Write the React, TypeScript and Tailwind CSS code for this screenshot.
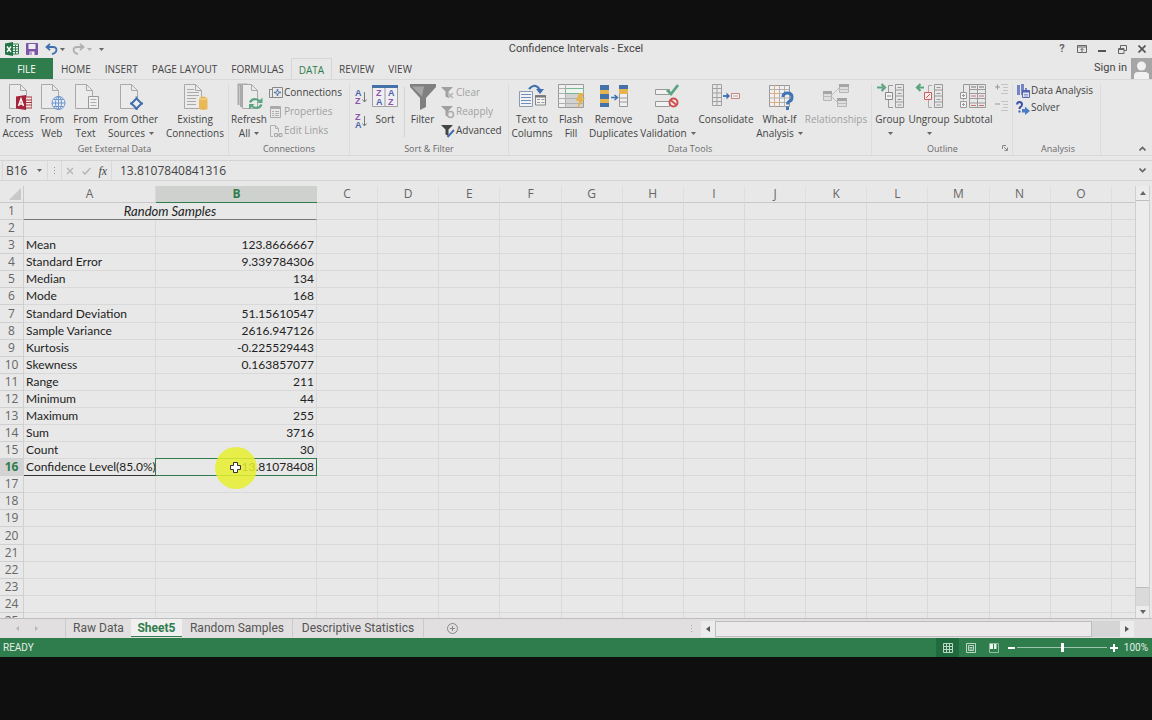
import type { ReactNode } from "react";
import { clsx } from "clsx";

const stats: [string, string][] = [
  ["Mean", "123.8666667"],
  ["Standard Error", "9.339784306"],
  ["Median", "134"],
  ["Mode", "168"],
  ["Standard Deviation", "51.15610547"],
  ["Sample Variance", "2616.947126"],
  ["Kurtosis", "-0.225529443"],
  ["Skewness", "0.163857077"],
  ["Range", "211"],
  ["Minimum", "44"],
  ["Maximum", "255"],
  ["Sum", "3716"],
  ["Count", "30"],
  ["Confidence Level(85.0%)", "13.81078408"],
];

const wideColumns = "CDEFGHIJKLMNO".split("");
const rowNumbers = Array.from({ length: 25 }, (_, i) => i + 1);

function Caret({ className = "" }: { className?: string }) {
  return (
    <svg viewBox="0 0 5 3" className={clsx("inline-block w-[5px] h-[3px] fill-[#666]", className)}>
      <path d="M0 0h5L2.5 3z" />
    </svg>
  );
}

function Icon({ children }: { children: ReactNode }) {
  return (
    <svg viewBox="0 0 28 28" className="w-7 h-7 shrink-0" fill="none">
      {children}
    </svg>
  );
}

function SmallIcon({ children }: { children: ReactNode }) {
  return (
    <svg viewBox="0 0 14 14" className="w-3.5 h-3.5 shrink-0" fill="none">
      {children}
    </svg>
  );
}

/* blank sheet with a folded corner, shared by the data source icons */
function Page() {
  return (
    <>
      <path d="M3.5 1.5h11l6 6v18h-17z" fill="#ebebeb" stroke="#a9a9a9" />
      <path d="M14.5 1.5v6h6" stroke="#a9a9a9" />
    </>
  );
}

type BigButtonProps = {
  icon: ReactNode;
  lines: string[];
  className: string;
  caret?: boolean;
  disabled?: boolean;
};

function BigButton({ icon, lines, className, caret, disabled }: BigButtonProps) {
  return (
    <button
      type="button"
      disabled={disabled}
      className={clsx(
        "flex flex-col items-center shrink-0 whitespace-nowrap leading-[14px]",
        disabled ? "text-[#a0a0a0]" : "text-[#444]",
        className
      )}
    >
      {icon}
      <span className="mt-px">{lines[0]}</span>
      <span className="flex items-center gap-1 h-3.5">
        {lines[1]}
        {caret && <Caret />}
      </span>
    </button>
  );
}

function SmallButton({ icon, label, disabled }: { icon: ReactNode; label: string; disabled?: boolean }) {
  return (
    <button
      type="button"
      disabled={disabled}
      className={clsx("flex items-center gap-px h-[19px] whitespace-nowrap", disabled ? "text-[#a0a0a0]" : "text-[#444]")}
    >
      {icon}
      {label}
    </button>
  );
}

function Group({ label, className, children }: { label: string; className: string; children: ReactNode }) {
  return (
    <section aria-label={label} className={clsx("relative flex flex-col justify-between shrink-0 border-r border-[#dcdcdc]", className)}>
      <div className="flex">{children}</div>
      <div className="text-center text-[9px] leading-3 text-[#6a6a6a]">{label}</div>
    </section>
  );
}

function TitleBar() {
  return (
    <header className="grid grid-cols-[1fr_auto_1fr] items-center h-[18px] text-[11px] text-[#444]">
      <div className="flex items-center pl-[5px]">
        <svg viewBox="0 0 14 14" className="w-3.5 h-3.5">
          <path d="M7 2h6.5v10H7z" fill="#f3f7f4" stroke="#2f7d4d" />
          <path d="M8 4.5h5M8 7h5M8 9.5h5M10.5 3v9" stroke="#2f7d4d" />
          <path d="M0 1.5 8 0v14l-8-1.500z" fill="#217346" />
          <path d="m2 4.500 4 5.500M6 4.500 2 10" stroke="#fff" strokeWidth="1.400" />
        </svg>
        <button type="button" aria-label="Save" className="ml-[7px]">
          <svg viewBox="0 0 12 12" className="w-3 h-3" fill="none">
            <path d="M.5.5h11v11H.5z" fill="#7c54a8" stroke="#7c54a8" />
            <path d="M2.500 1h7v5h-7zM3.500 8.500h5V12h-5z" fill="#eee" />
            <path d="M5 9v3" stroke="#7c54a8" />
          </svg>
        </button>
        <button type="button" aria-label="Undo" className="flex items-center gap-0.5 ml-[7px]">
          <svg viewBox="0 0 13 12" className="w-[13px] h-3" fill="none" stroke="#3f6fae" strokeWidth="1.800">
            <path d="M5 .8 1.500 4 5 7.200M1.500 4h6.500c5 0 4.500 6-1 7" />
          </svg>
          <Caret />
        </button>
        <button type="button" aria-label="Redo" className="flex items-center gap-0.5 ml-[7px]">
          <svg viewBox="0 0 13 12" className="w-[13px] h-3" fill="none" stroke="#b0b0b0" strokeWidth="1.800">
            <path d="M8 .8 11.500 4 8 7.200M11.500 4H5C0 4 .5 10 6 11" />
          </svg>
          <Caret className="opacity-40" />
        </button>
        <button type="button" aria-label="Customize Quick Access Toolbar" className="flex ml-[7px]">
          <Caret />
        </button>
      </div>
      <h1>Confidence Intervals - Excel</h1>
      <div className="flex justify-end">
        <button type="button" aria-label="Help" className="w-5 font-bold leading-4 text-[#666]">
          ?
        </button>
        <button type="button" aria-label="Ribbon Display Options" className="flex justify-center items-center w-5">
          <svg viewBox="0 0 10 8" className="w-2.5 h-2" fill="none" stroke="#666">
            <path d="M.5.5h9v7h-9zM.5 2h9M5 7V3.500M3.500 5 5 3.500 6.500 5" />
          </svg>
        </button>
        <button type="button" aria-label="Minimize" className="flex justify-center items-center w-5">
          <svg viewBox="0 0 8 8" className="w-2 h-2" stroke="#555" strokeWidth="2">
            <path d="M0 6h8" />
          </svg>
        </button>
        <button type="button" aria-label="Restore" className="flex justify-center items-center w-5">
          <svg viewBox="0 0 9 9" className="w-[9px] h-[9px]" fill="none" stroke="#666">
            <path d="M2.500 3V.5h6v5H6M.5 3.500H6v5H.5zM.5 4.500H6" />
          </svg>
        </button>
        <button type="button" aria-label="Close" className="flex justify-center items-center w-5">
          <svg viewBox="0 0 8 8" className="w-2 h-2" stroke="#555" strokeWidth="1.700">
            <path d="m.5.5 7 7M7.500.5l-7 7" />
          </svg>
        </button>
      </div>
    </header>
  );
}

function RibbonTabs() {
  return (
    <nav className="flex h-[21px] font-['Open_Sans',sans-serif] text-[10px] text-[#444]">
      <button type="button" className="w-[53px] pt-0.5 mr-px bg-[#2f7d4d] text-white">
        FILE
      </button>
      {["HOME", "INSERT", "PAGE LAYOUT", "FORMULAS", "DATA", "REVIEW", "VIEW"].map((tab) => (
        <button
          type="button"
          key={tab}
          className={clsx("px-[7px] pt-0.5", tab === "DATA" && "border border-b-0 border-[#d6d6d6] text-[#2f7d4d]")}
        >
          {tab}
        </button>
      ))}
      <a href="#signin" className="flex items-center ml-auto font-[Roboto,sans-serif] text-[11px]">
        Sign in
        <svg viewBox="0 0 21 21" className="w-[21px] h-[21px] ml-1">
          <path d="M0 0h21v21H0z" fill="#a6a6a6" />
          <circle cx="10.500" cy="8" r="4.500" fill="#f2f2f2" />
          <path d="M3 21v-3.500Q3 14 7 14h7q4 0 4 3.500V21z" fill="#f2f2f2" />
        </svg>
      </a>
    </nav>
  );
}

function GetExternalData() {
  return (
    <Group label="Get External Data" className="w-[229px] pl-px">
      <BigButton
        className="w-[34px]"
        lines={["From", "Access"]}
        icon={
          <Icon>
            <g transform="translate(2)">
              <Page />
              <path d="M19 14h7v11h-7z" fill="#f3e4e6" stroke="#a4373a" />
              <path d="M20 17h6M20 19.500h6M20 22h6" stroke="#a4373a" />
              <path d="m10 13.500 10-1.500v15l-10-1.500z" fill="#a3243b" />
              <path d="m12.500 23 2.500-7 2.500 7M13.500 21h3" stroke="#fff" strokeWidth="1.500" />
            </g>
          </Icon>
        }
      />
      <BigButton
        className="w-[34px]"
        lines={["From", "Web"]}
        icon={
          <Icon>
            <Page />
            <circle cx="20.500" cy="20" r="6.500" fill="#e6edf6" stroke="#6f94c9" />
            <ellipse cx="20.500" cy="20" rx="3" ry="6.500" stroke="#6f94c9" />
            <path d="M14 20h13M20.500 13.500v13M15.500 16.500h10M15.500 23.500h10" stroke="#6f94c9" />
          </Icon>
        }
      />
      <BigButton
        className="w-[33px]"
        lines={["From", "Text"]}
        icon={
          <Icon>
            <Page />
            <path d="M16.500 13.500h10v12h-10z" fill="#f0f0f0" stroke="#999" />
            <path d="M18.500 16.500h6M18.500 19.500h6M18.500 22.500h6" stroke="#aaa" />
          </Icon>
        }
      />
      <BigButton
        className="w-[58px]"
        lines={["From Other", "Sources"]}
        caret
        icon={
          <Icon>
            <Page />
            <path d="M19.500 14.500v-1M19.500 24v3M13 20.500h3M23 20.500h3" stroke="#3f6fae" strokeWidth="2" />
            <path d="m19.500 15.500 5 5-5 5-5-5z" fill="#eee" stroke="#3f6fae" strokeWidth="2" />
          </Icon>
        }
      />
      <div className="w-px h-11 mt-1 mx-px bg-[#d4d4d4]" />
      <BigButton
        className="w-[66px]"
        lines={["Existing", "Connections"]}
        icon={
          <Icon>
            <Page />
            <path d="M6 6.500h7M6 9.500h12M6 12.500h12M6 15.500h9M6 18.500h9M6 21.500h9" stroke="#aaa" />
            <path d="M18 15q4-3 8.500 0v11q-4 2-8.500 0z" fill="#e9b959" />
            <path d="M18 15.500q4 2 8.500 0" stroke="#f4dca4" />
          </Icon>
        }
      />
    </Group>
  );
}

function Connections() {
  return (
    <Group label="Connections" className="w-[121px]">
      <BigButton
        className="w-10"
        lines={["Refresh", "All"]}
        caret
        icon={
          <Icon>
            <path d="M3.500 22V1.500h9M6 24V2" stroke="#aaa" strokeWidth="2" />
            <path d="M7.500 1.500h9l6 6v18h-15z" fill="#ebebeb" stroke="#a9a9a9" />
            <path d="M16.500 1.500v6h6" stroke="#a9a9a9" />
            <path d="M15 19.500q2-4.500 7-3 2 .5 3 2M26.500 21.500q-2 4.500-7 3-2-.5-3-2" stroke="#5ca583" strokeWidth="2.200" />
            <path d="M27.500 14.500v5.500H22zM14 26.500V21h5.500z" fill="#5ca583" />
          </Icon>
        }
      />
      <div>
        <SmallButton
          label="Connections"
          icon={
            <SmallIcon>
              <path d="M3.500 1.500h10v10h-10z" stroke="#888" />
              <path d="M.5 3.500v8H4M0 3.500h3" stroke="#888" />
              <path d="M8.500 3v7M5 6.500h7" stroke="#5878a8" strokeWidth="1.500" />
              <circle cx="8.500" cy="6.500" r="1.500" fill="#eee" stroke="#5878a8" />
            </SmallIcon>
          }
        />
        <SmallButton
          disabled
          label="Properties"
          icon={
            <SmallIcon>
              <path d="M1.500 1.500h10v11h-10z" stroke="#aaa" />
              <path d="M2 3h9" stroke="#aaa" strokeWidth="2" />
              <path d="M3 6.500h2M6 6.500h4M3 8.500h2M6 8.500h4M3 10.500h2M6 10.500h4" stroke="#b0b0b0" />
            </SmallIcon>
          }
        />
        <SmallButton
          disabled
          label="Edit Links"
          icon={
            <SmallIcon>
              <path d="M4 12.500H1.500V1.500h5l3 3V8M6.500 1.500v3h3" stroke="#b0b0b0" />
              <path d="M5.500 9.500h3v3h-3zM10 9.500h3v3h-3zM7.500 11h4" stroke="#aaa" />
            </SmallIcon>
          }
        />
      </div>
    </Group>
  );
}

function SortOrderIcon({ top, bottom }: { top: string; bottom: string }) {
  return (
    <svg viewBox="0 0 13 18" className="w-[13px] h-[18px] font-['Liberation_Sans',sans-serif] text-[9px] font-bold">
      <text x="0" y="8" className={top === "A" ? "fill-[#4a68ad]" : "fill-[#8a55ad]"}>
        {top}
      </text>
      <text x="0" y="16" className={bottom === "A" ? "fill-[#4a68ad]" : "fill-[#8a55ad]"}>
        {bottom}
      </text>
      <path d="M9.500 4v10M7.500 11.500l2 2.500 2-2.500" fill="none" stroke="#777" />
    </svg>
  );
}

function FilterMark({ children }: { children: ReactNode }) {
  return (
    <SmallIcon>
      <path d="M0 1h12L7.500 5.500V12l-3-1.500v-5z" fill="currentColor" />
      {children}
    </SmallIcon>
  );
}

function SortFilter() {
  return (
    <Group label="Sort & Filter" className="w-[159px]">
      <div className="flex flex-col gap-1.5 w-5 pl-[5px] pt-[5px]">
        <button type="button" aria-label="Sort A to Z">
          <SortOrderIcon top="A" bottom="Z" />
        </button>
        <button type="button" aria-label="Sort Z to A">
          <SortOrderIcon top="Z" bottom="A" />
        </button>
      </div>
      <BigButton
        className="w-[30px]"
        lines={["Sort"]}
        icon={
          <Icon>
            <path d="M1.500 2.500h25v21h-25z" fill="#f0eef2" stroke="#a0a0a0" />
            <path d="M1 2h26v3H1z" fill="#4472a8" />
            <path d="M14 5v18" stroke="#999" />
            <g className="font-['Liberation_Sans',sans-serif] text-[9px] font-bold">
              <text x="5" y="13" fill="#8a55ad">Z</text>
              <text x="5" y="22" fill="#4a68ad">A</text>
              <text x="17" y="13" fill="#4a68ad">A</text>
              <text x="17" y="22" fill="#8a55ad">Z</text>
            </g>
          </Icon>
        }
      />
      <div className="w-px h-[50px] mt-1 ml-1 bg-[#d4d4d4]" />
      <BigButton
        className="w-[35px]"
        lines={["Filter"]}
        icon={
          <Icon>
            <path d="M1 1h26v3l-10 11v9l-6 3V15L1 4z" fill="#808080" />
            <path d="M3 3.500h12l-2 10z" fill="#a5a5a5" />
          </Icon>
        }
      />
      <div className="pl-px">
        <SmallButton
          disabled
          label="Clear"
          icon={
            <FilterMark>
              <path d="m7 7 5 5M12 7l-5 5" stroke="#b5b5b5" strokeWidth="1.500" />
            </FilterMark>
          }
        />
        <SmallButton
          disabled
          label="Reapply"
          icon={
            <FilterMark>
              <circle cx="9.500" cy="9.500" r="3" fill="#e8e8e8" stroke="#aaa" strokeWidth="1.500" />
            </FilterMark>
          }
        />
        <SmallButton
          label="Advanced"
          icon={
            <FilterMark>
              <path d="m6.500 13 6.500-7" stroke="#3f6fae" strokeWidth="2" />
            </FilterMark>
          }
        />
      </div>
    </Group>
  );
}

function DataTools() {
  return (
    <Group label="Data Tools" className="w-[363px]">
      <BigButton
        className="w-[46px]"
        lines={["Text to", "Columns"]}
        icon={
          <Icon>
            <path d="M11 6q6-7 11 1" stroke="#3f6fae" strokeWidth="2.200" />
            <path d="M18 6h8l-4 5z" fill="#3f6fae" />
            <path d="M1.500 8.500h13v15h-13z" fill="#f2f2f2" stroke="#8a9ab0" />
            <path d="M3 11.500h10M3 14.500h10M3 17.500h10M3 20.500h10" stroke="#6d8fc0" />
            <path d="M17.500 12.500h10v9.500h-10z" fill="#f2f2f2" stroke="#888" />
            <path d="M17 13.500h11" stroke="#777" strokeWidth="2" />
            <path d="M19 16.500h3M23.500 16.500h3M19 19.500h3M23.500 19.500h3" stroke="#999" />
          </Icon>
        }
      />
      <BigButton
        className="w-8"
        lines={["Flash", "Fill"]}
        icon={
          <Icon>
            <path d="M1.500 1.500h25v23h-25z" fill="#f0f0f0" stroke="#999" />
            <path d="M9 11h17v13H9z" fill="#d2d2d2" />
            <path d="M1.500 5.500h25M1.500 10.500h25M1.500 15.500h25M1.500 20.500h25M8.500 1.500v23" stroke="#b0b0b0" />
            <path d="M8.500 5.500h18v5h-18z" fill="#edf4f0" stroke="#79b697" />
            <path d="M22 10h5l-2 5h3l-8 11 2-8h-3z" fill="#e4b450" />
          </Icon>
        }
      />
      <BigButton
        className="w-[53px]"
        lines={["Remove", "Duplicates"]}
        icon={
          <Icon>
            <path d="M0 2h9v22H0z" fill="#4472a8" />
            <path d="M0 7h9v4H0zM0 16h9v4H0z" fill="#e4b450" />
            <path d="M11 14.500h6M14.500 12l3 2.500-3 2.500" stroke="#3f6fae" strokeWidth="1.500" />
            <path d="M19.500 2.500h8v21h-8z" fill="#f0f0f0" stroke="#999" />
            <path d="M19 2h9v4h-9z" fill="#4472a8" />
            <path d="M19 6h9v5h-9z" fill="#e4b450" />
            <path d="M19.500 15h8M19.500 19h8" stroke="#999" />
          </Icon>
        }
      />
      <BigButton
        className="w-14"
        lines={["Data", "Validation"]}
        caret
        icon={
          <Icon>
            <path d="M1.500 6.500h14v5h-14zM1.500 18.500h14v5h-14z" fill="#f2f2f2" stroke="#999" />
            <path d="m13 7 4 4 7-9" stroke="#5ca583" strokeWidth="2.800" />
            <circle cx="19.500" cy="19.500" r="4" fill="#f5e8e8" stroke="#cf5151" strokeWidth="2" />
            <path d="m16.500 17 6 5" stroke="#cf5151" strokeWidth="1.800" />
          </Icon>
        }
      />
      <BigButton
        className="w-[60px]"
        lines={["Consolidate"]}
        icon={
          <Icon>
            <path d="M.5 1.500h9v21h-9zM.5 5.500h9M.5 10h9M.5 14.500h9M.5 18.500h9M5 1.500v21" stroke="#a0a0a0" />
            <path d="M11 13h5" stroke="#3f6fae" strokeWidth="1.800" />
            <path d="M14.500 9.500 18 13l-3.500 3.500z" fill="#3f6fae" />
            <path d="M19.500 10.500h8v5h-8z" fill="#f2f2f2" stroke="#cf8080" />
            <path d="M21 13h5" stroke="#aaa" />
          </Icon>
        }
      />
      <BigButton
        className="w-[47px]"
        lines={["What-If", "Analysis"]}
        caret
        icon={
          <Icon>
            <path d="M3.500 2.500h20v21h-20z" fill="#f0f0f0" stroke="#999" />
            <path d="M3.500 6.500h20M3.500 10.500h20M3.500 15h20M3.500 19.500h20M8.500 2.500v21M13.500 2.500v21M18.500 2.500v21" stroke="#b0b0b0" />
            <path d="M8.500 2.500v21M4 10.500h9M4 19.500h9" stroke="#e2ad7c" />
            <path d="M17 14q0-4 4.500-4t4.500 4-3 4.500q-1.500 1-1.500 3" stroke="#3f75b5" strokeWidth="3" />
            <path d="M20 23.500h3v3.500h-3z" fill="#3f75b5" />
          </Icon>
        }
      />
      <BigButton
        className="w-[66px]"
        disabled
        lines={["Relationships"]}
        icon={
          <Icon>
            <path d="m10 12 7-7M10 14l6 6" stroke="#bbb" />
            <path d="M1.500 8.500h8v9h-8zM17.500 1.500h9v8h-9zM15.500 15.500h9v8h-9z" fill="#dedede" stroke="#b5b5b5" />
            <path d="M1 9.500h9M17 2.500h10M15 16.500h10" stroke="#a5a5a5" strokeWidth="3" />
            <path d="M2 13.500h7M18 6.500h8M16 20.500h8" stroke="#bbb" />
          </Icon>
        }
      />
    </Group>
  );
}

function Outline() {
  return (
    <Group label="Outline" className="w-[141px] pl-px">
      <BigButton
        className="w-[34px]"
        lines={["Group", ""]}
        caret
        icon={
          <Icon>
            <path d="M1 4.500h6M5.500 1 9 4.500 5.500 8" stroke="#5ca583" strokeWidth="2.200" />
            <path d="M12.500 9V2.500H17M12.500 17v7.500H17" stroke="#999" />
            <path d="M9.500 9.500h7v7h-7zM11 13h4" fill="#f2f2f2" stroke="#888" />
            <path d="M19.500 1.500h8v23h-8zM19.500 7h8M19.500 13h8M19.500 19h8M21.500 4.500h4M21.500 10.500h4M21.500 16.500h4M21.500 22h4" stroke="#999" />
          </Icon>
        }
      />
      <BigButton
        className="w-11"
        lines={["Ungroup", ""]}
        caret
        icon={
          <Icon>
            <path d="M2 4.500h7M5.500 1 2 4.500 5.500 8" stroke="#5ca583" strokeWidth="2.200" />
            <path d="M13.500 9V2.500H17M13.500 17v7.500H17" stroke="#aaa" />
            <path d="M9.500 9.500h7v7h-7zM11 15l4-4" fill="#f5ecec" stroke="#cf5b5b" />
            <path d="M19.500 1.500h8v23h-8zM19.500 7h8M19.500 13h8M19.500 19h8M21.500 4.500h4M21.500 10.500h4M21.500 16.500h4M21.500 22h4" stroke="#999" />
          </Icon>
        }
      />
      <BigButton
        className="w-11"
        lines={["Subtotal"]}
        icon={
          <Icon>
            <path d="M4.500 9V1.500H10M4.500 17v-2" stroke="#999" />
            <path d="M10.500 1.500h16v23h-16zM10.500 6.500h16M10.500 10.500h16M10.500 15.500h16M10.500 20h16M18.500 1.500v23" stroke="#999" />
            <path d="M1.500 9.500h6v6h-6zM1.500 18.500h6v6h-6zM3 12.500h3M4.500 11v3M3 21.500h3M4.500 20v3" fill="#f2f2f2" stroke="#999" />
            <path d="M12 13h5M20 13h5M12 22.500h5M20 22.500h5" stroke="#cf7070" />
            <path d="M12 4h5M20 4h5" stroke="#777" />
          </Icon>
        }
      />
      <div className="flex flex-col gap-[3px]">
        <button type="button" aria-label="Show Detail">
          <SmallIcon>
            <path d="M0 4h5M2.500 1.500v5" stroke="#999" />
            <path d="M6 1.500h7M8 4.500h5M8 7.500h5M6 10.500h7" stroke="#c4c4c4" />
          </SmallIcon>
        </button>
        <button type="button" aria-label="Hide Detail">
          <SmallIcon>
            <path d="M0 4h5" stroke="#999" />
            <path d="M6 1.500h7M8 4.500h5M8 7.500h5M6 10.500h7" stroke="#c4c4c4" />
          </SmallIcon>
        </button>
      </div>
      <button type="button" aria-label="Outline settings" className="absolute right-1 bottom-1">
        <svg viewBox="0 0 6 6" className="w-1.5 h-1.5" fill="none" stroke="#888">
          <path d="M.5 4V.5H4M2 2l3 3M5.500 2.500v3h-3" />
        </svg>
      </button>
    </Group>
  );
}

function Analysis() {
  return (
    <Group label="Analysis" className="w-[88px] pl-[3px]">
      <div className="flex flex-col -mt-0.5 -space-y-0.5">
        <SmallButton
          label="Data Analysis"
          icon={
            <SmallIcon>
              <path d="M1 1h3v10H1zM5 0h3v11H5zM9 4h2v3H9z" fill="#7485c4" />
              <path d="M6.500 6.500h7v7h-7z" fill="#e4e8f4" stroke="#5365ad" />
              <path d="M6 7.500h8" stroke="#5365ad" strokeWidth="2" />
              <path d="M8 10.500h4M8 12h4" stroke="#8a97c8" />
            </SmallIcon>
          }
        />
        <SmallButton
          label="Solver"
          icon={
            <SmallIcon>
              <path d="M1 3.500Q1 1 3.500 1T6 3.500Q6 5 4.500 6 3.500 6.500 3.500 8" stroke="#3c50a8" strokeWidth="2" />
              <path d="M2.500 9.500h2v2h-2z" fill="#3c50a8" />
              <path d="M6 8h3V5.500L14 10l-5 4v-2.500H6z" fill="#4b7cc4" />
            </SmallIcon>
          }
        />
      </div>
    </Group>
  );
}

function Chevron({ up }: { up?: boolean }) {
  return (
    <svg viewBox="0 0 7 5" className="w-[7px] h-[5px]" fill="none" stroke="#666" strokeWidth="1.600">
      <path d={up ? "M.5 4.500l3-3 3 3" : "M.5.5l3 3 3-3"} />
    </svg>
  );
}

function Ribbon() {
  return (
    <div className="flex h-[77px] pt-[3px] border-y border-[#d9d9d9] font-['Open_Sans',sans-serif] text-[10px]">
      <GetExternalData />
      <Connections />
      <SortFilter />
      <DataTools />
      <Outline />
      <Analysis />
      <button type="button" aria-label="Collapse the Ribbon" className="self-end ml-auto mr-1.5 mb-1">
        <Chevron up />
      </button>
    </div>
  );
}

function FormulaBar() {
  return (
    <div className="flex h-[21px] mt-1 border-y border-[#d4d4d4] font-['Open_Sans',sans-serif] text-[12px] text-[#444]">
      <div className="flex items-center w-[46px] ml-0.5 border-x border-[#d9d9d9]">
        <input aria-label="Name Box" defaultValue="B16" className="w-[34px] h-full pl-[3px] outline-none" />
        <Caret />
      </div>
      <div className="flex flex-col justify-center gap-0.5 w-[13px] pl-1.5">
        <i className="size-px bg-[#999]" />
        <i className="size-px bg-[#999]" />
        <i className="size-px bg-[#999]" />
      </div>
      <div className="flex items-center w-[51px] justify-around border-x border-[#d9d9d9]">
        <button type="button" aria-label="Cancel">
          <svg viewBox="0 0 8 8" className="w-2 h-2" stroke="#b5b5b5" strokeWidth="1.300">
            <path d="m1 1 6 6M7 1 1 7" />
          </svg>
        </button>
        <button type="button" aria-label="Enter">
          <svg viewBox="0 0 9 8" className="w-[9px] h-2" fill="none" stroke="#b5b5b5" strokeWidth="1.500">
            <path d="m.5 4.500 2.500 2.500L8.500 1" />
          </svg>
        </button>
        <button type="button" aria-label="Insert Function" className="font-['Liberation_Serif',serif] italic text-[12px]">
          fx
        </button>
      </div>
      <input aria-label="Formula" defaultValue="13.8107840841316" className="flex-1 min-w-0 h-full pl-2 outline-none" />
      <button type="button" aria-label="Expand Formula Bar" className="px-1.5">
        <Chevron />
      </button>
    </div>
  );
}

function Pointer() {
  return (
    <>
      <span className="absolute left-[59px] -top-3 size-[42px] rounded-full bg-[#e6ee2e]/85" />
      <svg viewBox="0 0 11 11" className="absolute left-[74px] top-[3px] w-[11px] h-[11px]">
        <path d="M3.500.5h4v3h3v4h-3v3h-4v-3h-3v-4h3z" fill="#fff" stroke="#333" />
      </svg>
    </>
  );
}

const gridLine = "border-r border-b border-[#d9d9d9]";

function Row({ n }: { n: number }) {
  const stat = stats[n - 3];
  const active = n === 16;
  return (
    <tr>
      <th
        scope="row"
        className={clsx(
          "border-r border-b border-[#d0d0d0] font-['Open_Sans',sans-serif]",
          active ? "bg-[#d2d3d2] font-bold text-[#2f7d4d]" : "font-normal text-[#666]"
        )}
      >
        {n}
      </th>
      {n === 1 ? (
        <td colSpan={2} className="border-r border-b border-r-[#d9d9d9] border-b-[#777] text-center text-[13px] italic">
          Random Samples
        </td>
      ) : (
        <>
          <td
            className={clsx(
              "border-r border-b border-r-[#d9d9d9] pl-0.5 whitespace-nowrap",
              active ? "border-b-[#333]" : "border-b-[#d9d9d9]"
            )}
          >
            {stat?.[0]}
          </td>
          <td className={clsx(gridLine, "relative pr-0.5 text-right")}>
            {stat?.[1]}
            {active && (
              <>
                <span className="absolute -inset-px border border-[#2f7d4d]" />
                <Pointer />
              </>
            )}
          </td>
        </>
      )}
      {wideColumns.map((c) => (
        <td key={c} className={gridLine} />
      ))}
      <td className="border-b border-[#d9d9d9]" />
    </tr>
  );
}

function Sheet() {
  return (
    <div className="flex h-[432px] mt-[5px]">
      <div className="flex-1 min-w-0 overflow-hidden">
        <table className="w-full h-[444px] table-fixed border-separate border-spacing-0 font-[Lato,sans-serif] text-[12px] leading-4 text-[#222]">
          <colgroup>
            <col className="w-6" />
            <col className="w-[132px]" />
            <col className="w-[161px]" />
            {wideColumns.map((c) => (
              <col key={c} />
            ))}
            <col className="w-[23px]" />
          </colgroup>
          <thead className="font-['Open_Sans',sans-serif] text-[#666]">
            <tr className="h-[17px]">
              <th className="border-r border-b border-[#c8c8c8]">
                <svg viewBox="0 0 12 12" className="w-3 h-3 ml-auto mr-0.5">
                  <path d="M12 0v12H0z" fill="#c8c8c8" />
                </svg>
              </th>
              <th scope="col" className="border-r border-b border-r-[#d9d9d9] border-b-[#c8c8c8] font-normal">A</th>
              <th scope="col" className="border-b border-[#2f7d4d] bg-[#cfd1cf] font-bold text-[#2f7d4d]">B</th>
              {wideColumns.map((c) => (
                <th scope="col" key={c} className="border-r border-b border-r-[#dfdfdf] border-b-[#c8c8c8] font-normal">
                  {c}
                </th>
              ))}
              <th className="border-b border-[#c8c8c8]" />
            </tr>
          </thead>
          <tbody>
            {rowNumbers.map((n) => (
              <Row key={n} n={n} />
            ))}
          </tbody>
        </table>
      </div>
      <div className="flex flex-col w-[15px] mr-0.5 border-x border-[#cfcfcf] bg-[#dadada]">
        <button type="button" aria-label="Scroll up" className="flex justify-center items-center h-3.5 bg-[#ececec]">
          <svg viewBox="0 0 6 4" className="w-1.5 h-1">
            <path d="M0 4h6L3 0z" fill="#666" />
          </svg>
        </button>
        <div className="h-[388px] border-y border-[#bdbdbd] bg-[#ececec]" />
        <button type="button" aria-label="Scroll down" className="flex justify-center items-center h-3 mt-auto bg-[#ececec]">
          <svg viewBox="0 0 6 4" className="w-1.5 h-1">
            <path d="M0 0h6L3 4z" fill="#666" />
          </svg>
        </button>
      </div>
    </div>
  );
}

function SheetTabs() {
  return (
    <div className="flex h-5 border-t border-[#bdbdbd] bg-[#e1dfdf] text-[12px] leading-4 text-[#555]">
      <div className="flex justify-center items-center gap-4 w-[66px] pr-3 border-r border-[#cacaca]">
        <button type="button" aria-label="Previous sheet">
          <svg viewBox="0 0 3 5" className="w-[3px] h-[5px]">
            <path d="M3 0v5L0 2.500z" fill="#b5b5b5" />
          </svg>
        </button>
        <button type="button" aria-label="Next sheet">
          <svg viewBox="0 0 3 5" className="w-[3px] h-[5px]">
            <path d="M0 0v5l3-2.500z" fill="#b5b5b5" />
          </svg>
        </button>
      </div>
      <button type="button" className="w-[65px] h-[18px]">Raw Data</button>
      <button type="button" className="w-[51px] h-[18px] border-b border-[#2f7d4d] bg-[#f0f0f0] font-bold text-[#2f7d4d]">
        Sheet5
      </button>
      <button type="button" className="w-[111px] h-[18px] border-r border-[#cacaca]">Random Samples</button>
      <button type="button" className="w-[131px] h-[18px] border-r border-[#cacaca]">Descriptive Statistics</button>
      <button type="button" aria-label="New sheet" className="ml-[23px]">
        <svg viewBox="0 0 11 11" className="w-[11px] h-[11px]" fill="none" stroke="#888">
          <circle cx="5.500" cy="5.500" r="5" />
          <path d="M5.500 3v5M3 5.500h5" />
        </svg>
      </button>
      <div className="flex items-center w-[461px] ml-auto pr-[18px]">
        <div className="flex flex-col gap-0.5 w-[10px]">
          <i className="size-px bg-[#aaa]" />
          <i className="size-px bg-[#aaa]" />
          <i className="size-px bg-[#aaa]" />
        </div>
        <button type="button" aria-label="Scroll left" className="flex justify-center items-center w-3.5 h-4 bg-[#ececec]">
          <svg viewBox="0 0 4 6" className="w-1 h-1.5">
            <path d="M4 0v6L0 3z" fill="#555" />
          </svg>
        </button>
        <div className="flex-1 h-4 bg-[#d6d5d5]">
          <div className="w-[93%] h-4 border border-[#bdbdbd] bg-[#ebe9e9]" />
        </div>
        <button type="button" aria-label="Scroll right" className="flex justify-center items-center w-3.5 h-4 bg-[#ececec]">
          <svg viewBox="0 0 4 6" className="w-1 h-1.5">
            <path d="M0 0v6l4-3z" fill="#555" />
          </svg>
        </button>
      </div>
    </div>
  );
}

function StatusBar() {
  return (
    <footer className="flex items-center h-[19px] pl-[3px] pr-1 bg-[#2f7d4d] text-[10px] text-[#e3efe7]">
      <span>READY</span>
      <button type="button" aria-label="Normal" className="flex justify-center items-center w-[23px] h-full ml-auto bg-[#1f6b3d]">
        <svg viewBox="0 0 10 10" className="w-2.5 h-2.5" fill="none" stroke="#b9d6c4">
          <path d="M.5.5h9v9h-9zM.5 3.500h9M.5 6.500h9M3.500.5v9M6.500.5v9" />
        </svg>
      </button>
      <button type="button" aria-label="Page Layout" className="flex justify-center items-center w-[23px] h-full">
        <svg viewBox="0 0 10 10" className="w-2.5 h-2.5" fill="none" stroke="#b9d6c4">
          <path d="M.5.5h9v9h-9zM2.500 2.500h5v5h-5zM3.500 4.500h3M3.500 6h3" />
        </svg>
      </button>
      <button type="button" aria-label="Page Break Preview" className="flex justify-center items-center w-[23px] h-full">
        <svg viewBox="0 0 10 10" className="w-2.5 h-2.5" fill="none" stroke="#8fbfa2">
          <path d="M.5.5h9v9h-9z" />
          <path d="M1 1h3v5H1zM5 1h2.500v5H5z" fill="#eef5f0" stroke="none" />
        </svg>
      </button>
      <button type="button" aria-label="Zoom out" className="flex justify-center w-[11px]">
        <svg viewBox="0 0 8 8" className="w-2 h-2" stroke="#fff" strokeWidth="2">
          <path d="M1 4h7" />
        </svg>
      </button>
      <input
        type="range"
        aria-label="Zoom"
        min="10"
        max="190"
        defaultValue="100"
        className="w-[90px] h-px mx-px appearance-none bg-[#9dc4ad] [&::-webkit-slider-thumb]:appearance-none [&::-webkit-slider-thumb]:w-[3px] [&::-webkit-slider-thumb]:h-[9px] [&::-webkit-slider-thumb]:bg-white"
      />
      <button type="button" aria-label="Zoom in" className="flex justify-center w-[11px]">
        <svg viewBox="0 0 8 8" className="w-2 h-2" stroke="#fff" strokeWidth="2">
          <path d="M0 4h8M4 0v8" />
        </svg>
      </button>
      <span className="w-[29px] text-right">100%</span>
    </footer>
  );
}

export default function App() {
  return (
    <div className="min-h-screen overflow-hidden pt-10 bg-[#0f0f0f] font-[Roboto,sans-serif]">
      <main className="bg-[#e8e8e8]">
        <TitleBar />
        <RibbonTabs />
        <Ribbon />
        <FormulaBar />
        <Sheet />
        <SheetTabs />
        <StatusBar />
      </main>
    </div>
  );
}
